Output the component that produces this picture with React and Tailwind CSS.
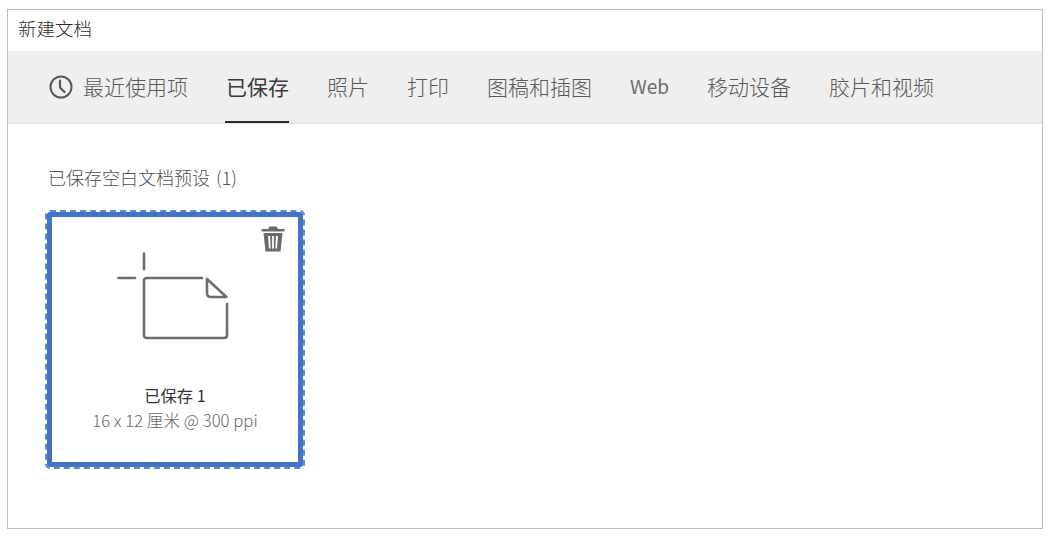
const fontStack = { fontFamily: '"Noto Sans CJK SC", "Open Sans", sans-serif' };

const tabs = ["已保存", "照片", "打印", "图稿和插图", "Web", "移动设备", "胶片和视频"];

function ClockIcon() {
  return (
    <svg width="24" height="24" viewBox="0 0 24 24" fill="none" stroke="#58595b" strokeWidth="2" className="shrink-0">
      <circle cx="12" cy="12" r="10.5" />
      <path d="M11 5.5 V12.5 L15.5 17" strokeLinecap="round" strokeLinejoin="round" strokeWidth="2.2" />
    </svg>
  );
}

function TrashIcon() {
  return (
    <svg width="24" height="26" viewBox="0 0 24 26" fill="#6a6b6d">
      <path d="M8.5 0.5 H15.5 L17 3 H23.5 V5.5 H0.5 V3 H7 Z" />
      <path fillRule="evenodd" d="M2.5 7 H21.5 L19.5 25.5 H4.5 Z M7 10 L8 22.5 H9.6 L9.2 10 Z M11.1 10 V22.5 H12.9 V10 Z M14.8 10 L14.4 22.5 H16 L17 10 Z" />
    </svg>
  );
}

function NewDocIcon() {
  return (
    <svg width="112" height="88" viewBox="0 0 112 88" fill="none" stroke="#6d6e71" strokeWidth="2.6" strokeLinecap="round" strokeLinejoin="round">
      <path d="M27 1.5 V17" />
      <path d="M1.5 26 H18" />
      <path d="M85 26 H30 Q27 26 27 29 V83 Q27 86 30 86 H107 Q110 86 110 83 V52" />
      <path d="M90 27 V41 Q90 45 94 45 H109.5 Z" />
    </svg>
  );
}

export default function App() {
  return (
    <div style={fontStack} className="w-[1047px] h-[537px] bg-white pt-[9px] pl-[7px] pr-[4px] pb-[8px] overflow-hidden">
      <div className="h-full border border-[#bcbcbc] flex flex-col">
        <div className="h-[41px] flex items-center pl-[10px] pb-[4px] text-[18.5px] font-light text-[#2c2c2c]">新建文档</div>

        {/* tab bar */}
        <div className="h-[73px] bg-[#efefef] border-b-2 border-[#e6e6e6] flex items-stretch pl-[41px] gap-[38px] text-[#58595b] text-[21px] font-light">
          <div className="flex items-center gap-[10px] whitespace-nowrap">
            <ClockIcon />
            <span>最近使用项</span>
          </div>
          {tabs.map((t, i) => (
            <div key={t} className="relative flex items-center whitespace-nowrap">
              <span className={t === "Web" ? "text-[19px] font-normal text-[#6b6c70]" : i === 0 ? "text-[#3b3b3b] font-normal" : ""}>{t}</span>
              {i === 0 && <span className="absolute left-[-1px] right-0 bottom-[-1px] h-[2px] bg-[#2c2c2c]" />}
            </div>
          ))}
        </div>

        {/* saved presets */}
        <div className="pl-[39px] pt-[41px]">
          <div className="pl-[1px] text-[#4f5052] text-[18px] leading-[24px] font-light">
            已保存空白文档预设 <span className="ml-[2px]">(1)</span>
          </div>
          <div className="relative mt-[23px] w-[256px] h-[255px] border-[5px] border-[#4374c4] rounded-[3px] outline-2 outline-dashed outline-[#5a8ad0] flex flex-col items-center">
            <div className="absolute top-[9px] right-[13px]">
              <TrashIcon />
            </div>
            <div className="mt-[35px] mr-[4px]">
              <NewDocIcon />
            </div>
            <div className="mt-[44px] text-[16.3px] leading-[22px] text-[#333333]">已保存 1</div>
            <div className="mt-[3px] text-[16.7px] leading-[22px] text-[#66676a] font-light">16 x 12 厘米 @ 300 ppi</div>
          </div>
        </div>
      </div>
    </div>
  );
}
